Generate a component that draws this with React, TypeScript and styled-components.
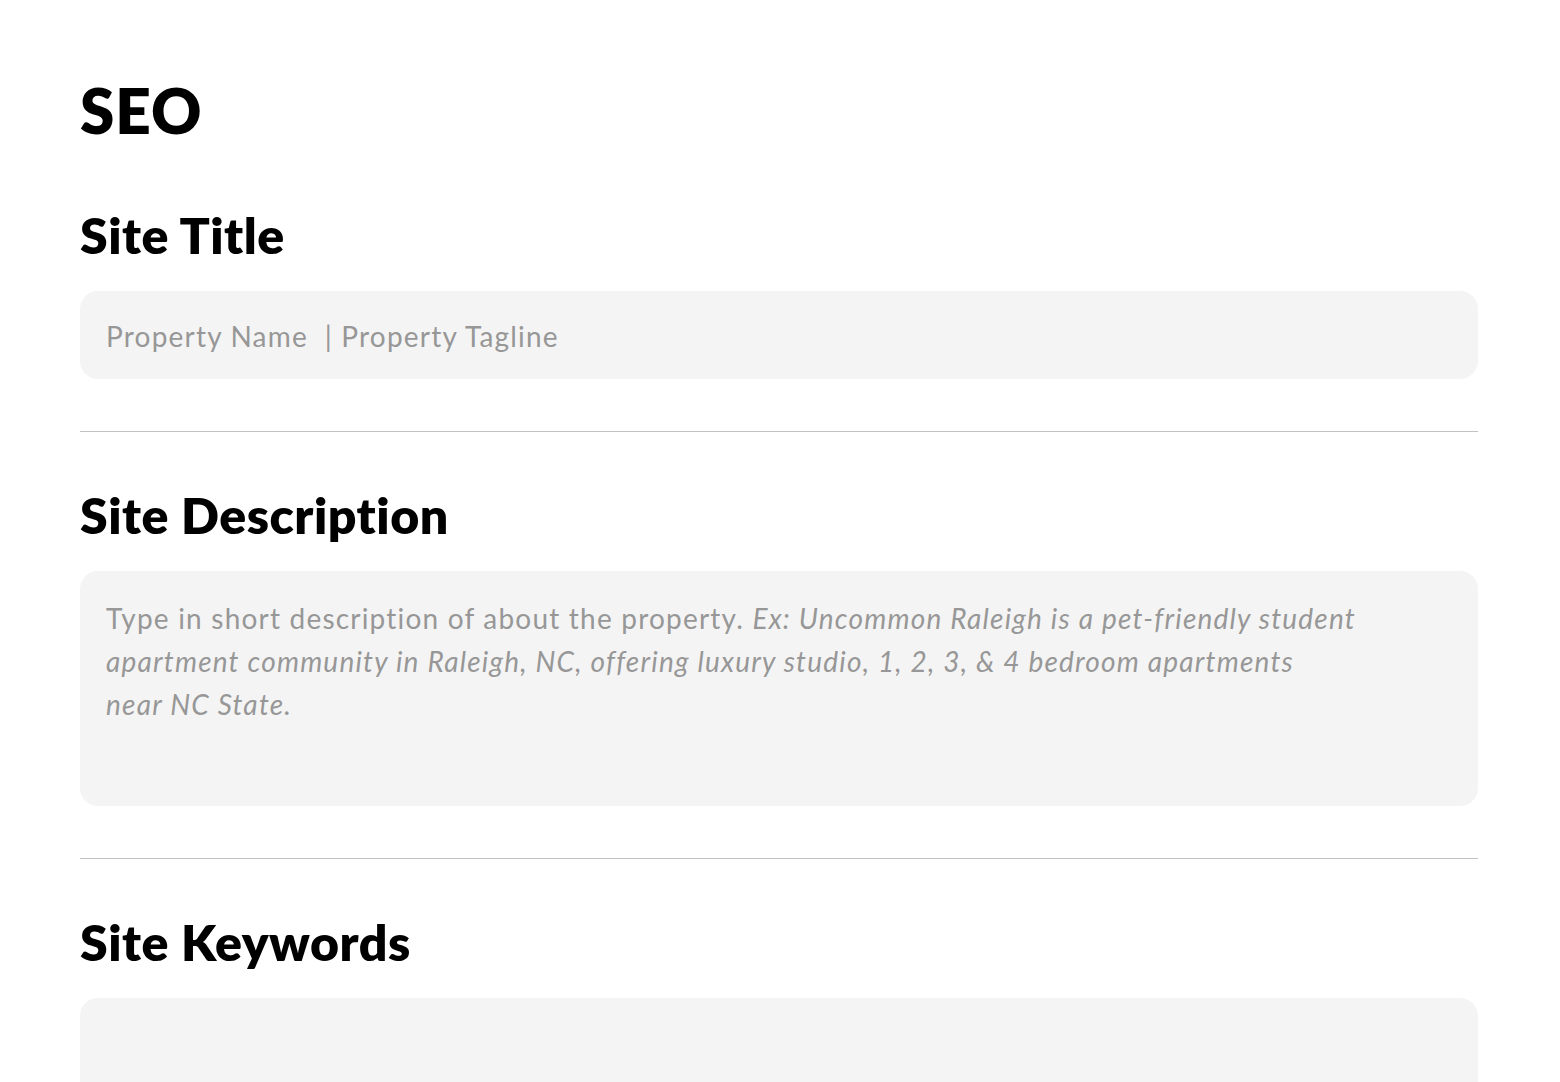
import React from "react";
import styled, { createGlobalStyle } from "styled-components";

const Global = createGlobalStyle`
  html, body { margin: 0; padding: 0; background: #ffffff; }
  body { font-family: Lato, "Noto Sans", "Liberation Sans", sans-serif; color: #000; }
  * { box-sizing: border-box; }
`;

const Page = styled.main`
  display: flex;
  flex-direction: column;
  padding: 72px 82px 0 80px;
  height: 1082px;
  overflow: hidden;
`;

const PageTitle = styled.h1`
  margin: 0 0 57px 0;
  font-size: 62px;
  line-height: 76px;
  font-weight: 800;
  letter-spacing: 1px;
`;

const Section = styled.section`
  display: flex;
  flex-direction: column;
`;

const SectionTitle = styled.h2`
  margin: 0 0 26px 0;
  font-size: 50px;
  line-height: 60px;
  font-weight: 800;
  letter-spacing: 0.5px;
`;

const Field = styled.div<{ $height: number }>`
  background: #f4f4f4;
  border-radius: 18px;
  height: ${(p) => p.$height}px;
  padding: 26px 26px;
  font-size: 28px;
  line-height: 43px;
  letter-spacing: 1.2px;
  color: #979797;
`;

const SingleField = styled(Field)`
  display: flex;
  align-items: center;
  padding-top: 2px;
  padding-bottom: 0;
`;

const Example = styled.em`
  font-style: italic;
`;

const Divider = styled.hr`
  border: none;
  border-top: 1.5px solid #c2c2c2;
  margin: 52px 0 53px 0;
`;

export default function App() {
  return (
    <>
      <Global />
      <Page>
        <PageTitle>SEO</PageTitle>
        <Section>
          <SectionTitle>Site Title</SectionTitle>
          <SingleField $height={88}>Property Name&nbsp; | Property Tagline</SingleField>
        </Section>
        <Divider />
        <Section>
          <SectionTitle>Site Description</SectionTitle>
          <Field $height={235}>
            Type in short description of about the property.{" "}
            <Example>
              Ex: Uncommon Raleigh is a pet-friendly student
              <br />
              apartment community in Raleigh, NC, offering luxury studio, 1, 2, 3, &amp; 4 bedroom apartments
              <br />
              near NC State.
            </Example>
          </Field>
        </Section>
        <Divider />
        <Section>
          <SectionTitle>Site Keywords</SectionTitle>
          <Field $height={200} />
        </Section>
      </Page>
    </>
  );
}
